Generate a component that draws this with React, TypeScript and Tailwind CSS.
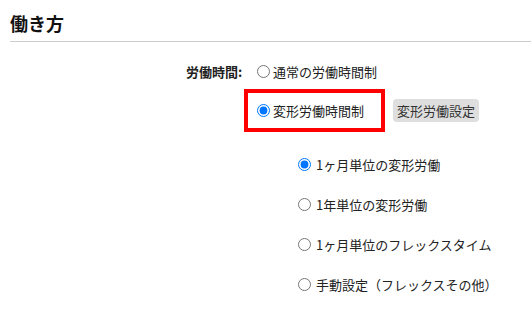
import { useState } from "react";

const SUB_OPTIONS = [
  "1ヶ月単位の変形労働",
  "1年単位の変形労働",
  "1ヶ月単位のフレックスタイム",
  "手動設定（フレックスその他）",
];

export default function App() {
  const [mode, setMode] = useState<"normal" | "variable">("variable");
  const [sub, setSub] = useState(0);

  return (
    <div
      className="w-[531px] h-[311px] overflow-hidden bg-white text-[#222] text-[13px]"
      style={{ fontFamily: '"Noto Sans CJK JP", "Noto Sans", sans-serif' }}
    >
      <div className="pl-[10px]">
        <h2 className="h-[42px] border-b border-[#cccccc] pt-[11px] text-[18px] font-bold leading-[24px] text-[#111]">
          働き方
        </h2>
      </div>

      <div className="mt-[19px] flex h-[21px] items-center">
        <span className="ml-[186px] w-[71px] font-bold leading-none">労働時間:</span>
        <input
          type="radio"
          name="mode"
          className="m-0 h-[13px] w-[13px]"
          checked={mode === "normal"}
          onChange={() => setMode("normal")}
        />
        <span className="ml-[3px] leading-none">通常の労働時間制</span>
      </div>

      <div className="mt-[7px] flex items-center">
        <div className="ml-[244px] flex h-[43px] w-[141px] items-center border-4 border-[#ff0000] pl-[9px]">
          <input
            type="radio"
            name="mode"
            className="m-0 h-[13px] w-[13px]"
            checked={mode === "variable"}
            onChange={() => setMode("variable")}
          />
          <span className="ml-[3px] leading-none">変形労働時間制</span>
        </div>
        <button
          type="button"
          className="ml-[8px] h-[23px] rounded-[4px] bg-[#dedede] px-[4px] leading-none text-[#333]"
        >
          変形労働設定
        </button>
      </div>

      <div className="mt-[12px] flex flex-col">
        {SUB_OPTIONS.map((label, i) => (
          <div key={label} className="flex h-[40px] items-center">
            <input
              type="radio"
              name="sub"
              className="m-0 ml-[298px] h-[13px] w-[13px]"
              checked={sub === i}
              onChange={() => setSub(i)}
            />
            <span className="ml-[5px] leading-none">{label}</span>
          </div>
        ))}
      </div>
    </div>
  );
}
